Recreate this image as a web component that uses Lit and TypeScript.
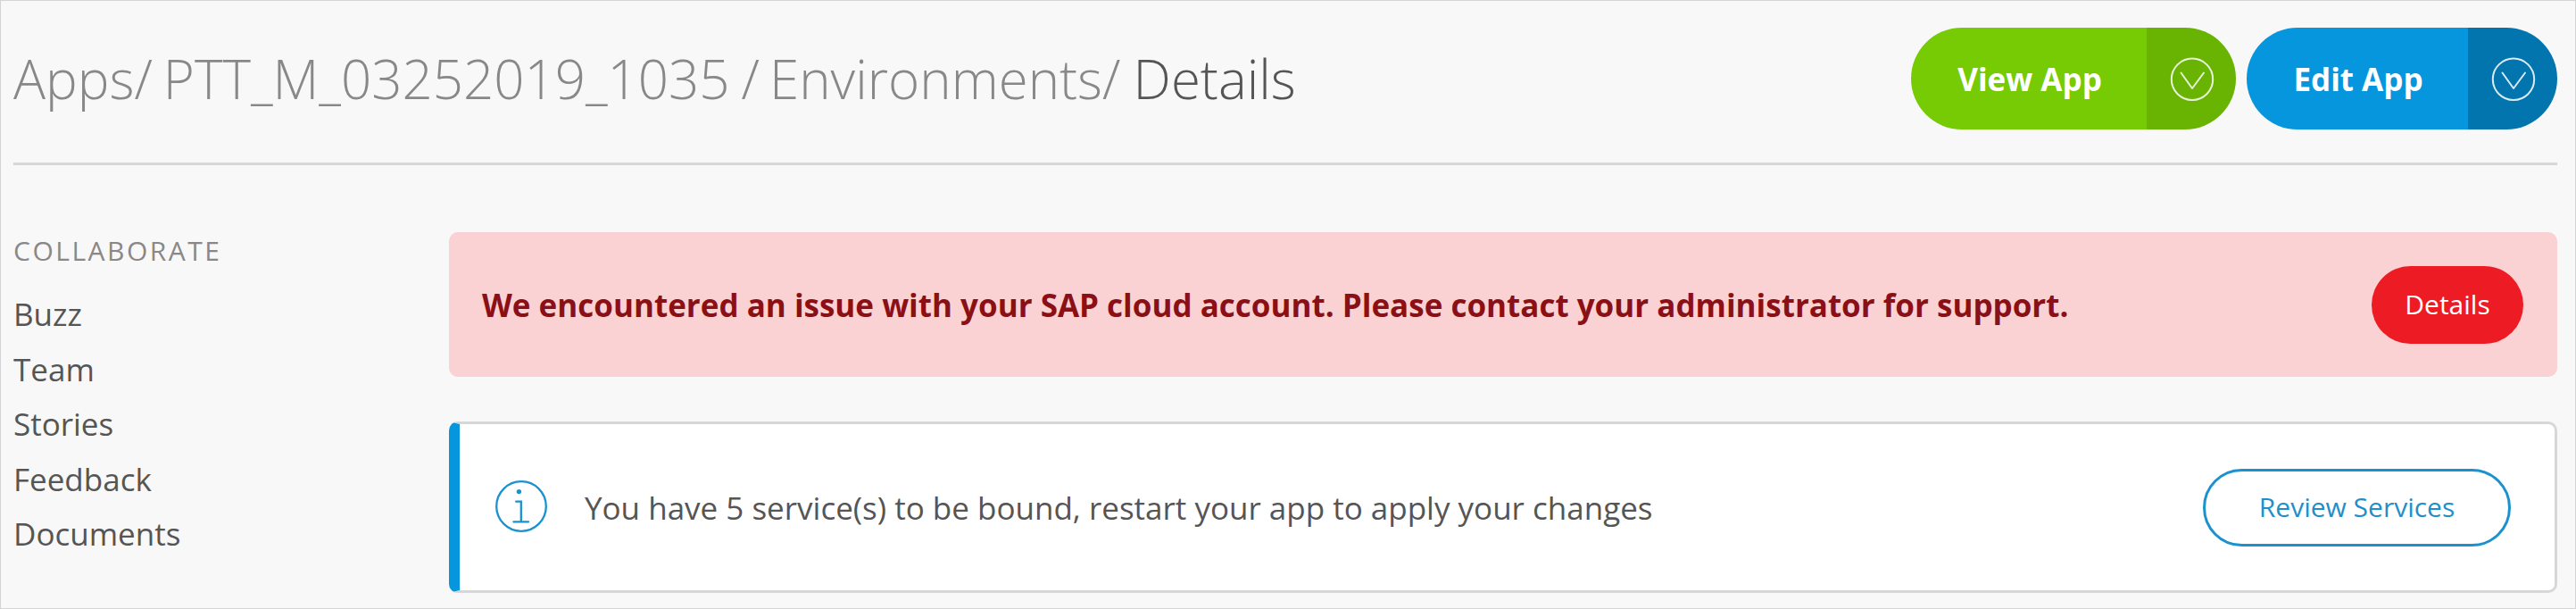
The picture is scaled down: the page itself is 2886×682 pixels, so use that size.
import { LitElement, html, css, svg } from "lit";
import { customElement, property } from "lit/decorators.js";

@customElement("split-button")
class SplitButton extends LitElement {
  @property() label = "";

  static styles = css`
    :host { display: flex; height: 114px; border-radius: 57px; overflow: hidden; color: #fff; }
    .main { flex: 1; display: flex; align-items: center; justify-content: center; background: var(--main); padding: 1px 0 0 2px;
      font-weight: 700; font-size: 35px; line-height: 48px; white-space: nowrap; }
    .more { width: 100px; display: flex; align-items: center; background: var(--dark); }
    .chevron { width: 50px; height: 50px; margin-left: 26px; }
  `;

  render() {
    return html`
      <div class="main"><span>${this.label}</span></div>
      <div class="more">
        <svg class="chevron" viewBox="0 0 50 50" fill="none" stroke="#fff" stroke-opacity=".85" stroke-width="2" stroke-linecap="round" stroke-linejoin="round">
          <circle cx="25" cy="25.8" r="23.2"></circle>
          <path d="M12.5 18.5 L25 36 L38 18.5"></path>
        </svg>
      </div>`;
  }
}

@customElement("app-root")
class AppRoot extends LitElement {
  private links = ["Buzz", "Team", "Stories", "Feedback", "Documents"];

  static styles = css`
    :host { display: block; font-family: "Open Sans", "Noto Sans", sans-serif; color: #555; }
    .page { box-sizing: border-box; width: 2886px; height: 682px; padding: 30px 20px 0 14px;
      background: #f8f8f8; border: 1px solid #d4d4d4; overflow: hidden; }
    .header { display: flex; height: 151px; border-bottom: 3px solid #d7d7d7; }
    .crumbs { flex: 1; display: flex; padding-top: 16px; font-size: 60px; line-height: 82px; font-weight: 300;
      color: #888; white-space: pre; }
    .app { margin: 0 13px 0 12px; }
    .env { margin: 0 14px 0 11px; }
    .current { color: #555; }
    .actions { display: flex; gap: 12px; }
    .view { width: 364px; --main: #76cb04; --dark: #69b303; }
    .edit { width: 348px; --main: #0696dd; --dark: #0375ae; }
    .body { display: flex; padding-top: 75px; }
    .side { width: 488px; }
    .title { font-size: 30px; line-height: 42px; color: #888; letter-spacing: 2.5px; }
    .list { margin: 19px 0 0; padding: 0; list-style: none; font-size: 35px; line-height: 61.5px; }
    .content { flex: 1; display: flex; flex-direction: column; gap: 50px; }
    .alert, .info { box-sizing: border-box; display: flex; align-items: center; justify-content: space-between; border-radius: 10px; }
    .alert { height: 162px; padding: 0 38px 0 37px; background: #fad2d3; color: #8b1015; font-size: 35px; font-weight: 700; }
    .info { height: 192px; padding-right: 49px; background: #fff; border: 3px solid #d7d7d7; border-left: 12px solid #0696dd; font-size: 35px; }
    .icon { width: 60px; height: 60px; margin: 0 41px 0 39px; }
    .message { flex: 1; }
    .btn { box-sizing: border-box; height: 87px; padding-bottom: 2px; border-radius: 44px; display: flex; align-items: center;
      justify-content: center; font-size: 30px; font-weight: 400; }
    .danger { width: 170px; background: #ed1c24; color: #fff; }
    .outline { width: 345px; border: 3px solid #1a92cf; color: #1e8fca; }
  `;

  render() {
    const infoIcon = svg`
      <circle cx="30" cy="29" r="27.8"></circle>
      <path d="M24.2 23.7 H29.8 V46.3 M21.4 46.3 H38"></path>
      <circle cx="27.4" cy="12.6" r="2.7" fill="#1a92cf" stroke="none"></circle>`;
    return html`
      <div class="page">
        <header class="header">
          <nav class="crumbs"><span>Apps/</span><span class="app">PTT_M_03252019_1035</span><span>/</span><span class="env">Environments/</span><span class="current">Details</span></nav>
          <div class="actions">
            <split-button class="view" label="View App"></split-button>
            <split-button class="edit" label="Edit App"></split-button>
          </div>
        </header>
        <div class="body">
          <aside class="side">
            <div class="title">COLLABORATE</div>
            <ul class="list">${this.links.map((l) => html`<li>${l}</li>`)}</ul>
          </aside>
          <main class="content">
            <section class="alert">
              <span>We encountered an issue with your SAP cloud account. Please contact your administrator for support.</span>
              <div class="btn danger">Details</div>
            </section>
            <section class="info">
              <svg class="icon" viewBox="0 0 60 60" fill="none" stroke="#1a92cf" stroke-width="2.3" stroke-linecap="round">${infoIcon}</svg>
              <span class="message">You have 5 service(s) to be bound, restart your app to apply your changes</span>
              <div class="btn outline">Review Services</div>
            </section>
          </main>
        </div>
      </div>`;
  }
}
